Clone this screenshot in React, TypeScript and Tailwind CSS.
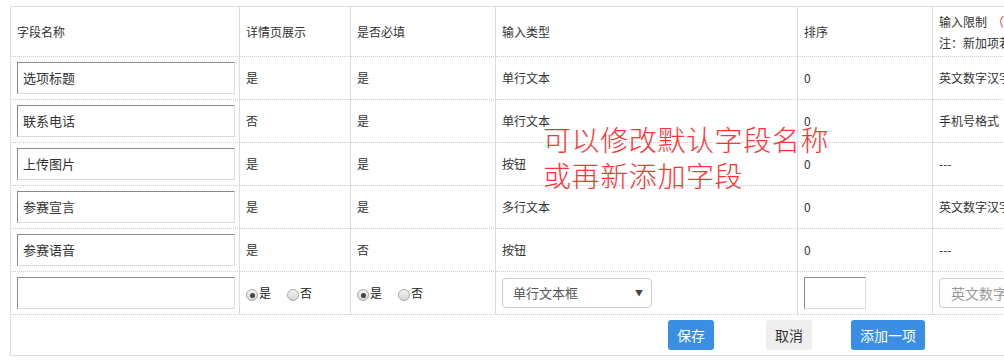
import React from 'react';

const font = { fontFamily: '"Noto Sans CJK SC", "Liberation Sans", sans-serif' };

type Row = { name: string; detail: string; required: string; type: string; sort: string; limit: string };

const rows: Row[] = [
  { name: '选项标题', detail: '是', required: '是', type: '单行文本', sort: '0', limit: '英文数字汉字' },
  { name: '联系电话', detail: '否', required: '是', type: '单行文本', sort: '0', limit: '手机号格式' },
  { name: '上传图片', detail: '是', required: '是', type: '按钮', sort: '0', limit: '---' },
  { name: '参赛宣言', detail: '是', required: '是', type: '多行文本', sort: '0', limit: '英文数字汉字' },
  { name: '参赛语音', detail: '是', required: '否', type: '按钮', sort: '0', limit: '---' },
];

const cell =
  'h-[43px] pl-[6px] align-middle border-r border-r-[#ddd] border-b border-b-[#ccc] [border-bottom-style:dotted] text-[12px] text-[#333] whitespace-nowrap overflow-hidden';
const lastCell =
  'h-[43px] pl-[6px] align-middle border-b border-b-[#ccc] [border-bottom-style:dotted] text-[12px] text-[#333] whitespace-nowrap overflow-hidden';

function InsetInput({ value, className }: { value?: string; className: string }) {
  return (
    <div
      className={`h-[32px] flex items-center pl-[5px] text-[13px] text-[#333] bg-white border border-t-[#8a8a8a] border-l-[#8a8a8a] border-b-[#dcdcdc] border-r-[#dcdcdc] ${className}`}
    >
      {value}
    </div>
  );
}

function Radio({ checked, label }: { checked?: boolean; label: string }) {
  return (
    <span className="inline-flex items-center">
      <span className="w-[12px] h-[12px] rounded-full border border-[#a9a9a9] bg-gradient-to-b from-[#f4f4f4] to-[#d5d5d5] flex items-center justify-center">
        {checked && <span className="w-[5px] h-[5px] rounded-full bg-[#444]" />}
      </span>
      <span className="ml-[1px] -mt-[4px] text-[12px] text-[#222]">{label}</span>
    </span>
  );
}

export default function App() {
  return (
    <div className="relative w-[1004px] h-[362px] overflow-hidden bg-white" style={font}>
      <div className="ml-[10px] mt-[6px] w-[1150px] border border-[#ddd]">
        <table className="table-fixed border-separate [border-spacing:0] w-[1148px]">
          <colgroup>
            <col className="w-[229px]" />
            <col className="w-[111px]" />
            <col className="w-[145px]" />
            <col className="w-[302px]" />
            <col className="w-[135px]" />
            <col />
          </colgroup>
          <thead>
            <tr>
              <th className={`${cell} h-[50px] font-normal text-left`}>字段名称</th>
              <th className={`${cell} h-[50px] font-normal text-left`}>详情页展示</th>
              <th className={`${cell} h-[50px] font-normal text-left`}>是否必填</th>
              <th className={`${cell} h-[50px] font-normal text-left`}>输入类型</th>
              <th className={`${cell} h-[50px] font-normal text-left`}>排序</th>
              <th className={`${lastCell} h-[50px] font-normal text-left pl-[5px]`}>
                <div className="leading-[21px] pt-[1px]">
                  输入限制<span className="ml-[5px] text-[#f33]">（必填项）</span>
                </div>
                <div className="leading-[21px]">注：新加项若不填写则不限制</div>
              </th>
            </tr>
          </thead>
          <tbody>
            {rows.map((r) => (
              <tr key={r.name}>
                <td className={cell}>
                  <InsetInput value={r.name} className="w-[218px]" />
                </td>
                <td className={cell}>{r.detail}</td>
                <td className={cell}>{r.required}</td>
                <td className={cell}>{r.type}</td>
                <td className={cell}>{r.sort}</td>
                <td className={`${lastCell} pl-[5px]`}>{r.limit}</td>
              </tr>
            ))}
            <tr>
              <td className={cell}>
                <InsetInput className="w-[218px]" />
              </td>
              <td className={cell}>
                <div className="flex items-center gap-[16px] pt-[4px]">
                  <Radio checked label="是" />
                  <Radio label="否" />
                </div>
              </td>
              <td className={cell}>
                <div className="flex items-center gap-[16px] pt-[4px]">
                  <Radio checked label="是" />
                  <Radio label="否" />
                </div>
              </td>
              <td className={cell}>
                <div className="w-[150px] h-[30px] rounded-[4px] border border-[#ccc] flex items-center justify-between pl-[10px] pr-[8px] text-[13px] text-[#555]">
                  <span>单行文本框</span>
                  <span className="text-[8px] text-[#444]">▼</span>
                </div>
              </td>
              <td className={`${cell} pl-[4px]`}>
                <InsetInput className="w-[62px]" />
              </td>
              <td className={`${lastCell} pl-[5px]`}>
                <div className="w-[180px] h-[30px] rounded-[4px] border border-[#ccc] flex items-center pl-[11px] text-[14px] text-[#999]">
                  英文数字汉字
                </div>
              </td>
            </tr>
          </tbody>
        </table>
        <div className="h-[40px] flex items-center">
          <button className="ml-[657px] w-[46px] h-[30px] rounded-[3px] bg-[#3a8ee3] text-white text-[14px]">保存</button>
          <button className="ml-[52px] w-[46px] h-[30px] rounded-[3px] bg-[#eee] text-[#333] text-[14px]">取消</button>
          <button className="ml-[39px] w-[74px] h-[30px] rounded-[3px] bg-[#3a8ee3] text-white text-[14px]">添加一项</button>
        </div>
      </div>
      <div className="absolute left-[543px] top-[121px] text-[28px] leading-[36px] text-[#f33] tracking-[0.6px] font-light">
        <div>可以修改默认字段名称</div>
        <div>或再新添加字段</div>
      </div>
    </div>
  );
}
